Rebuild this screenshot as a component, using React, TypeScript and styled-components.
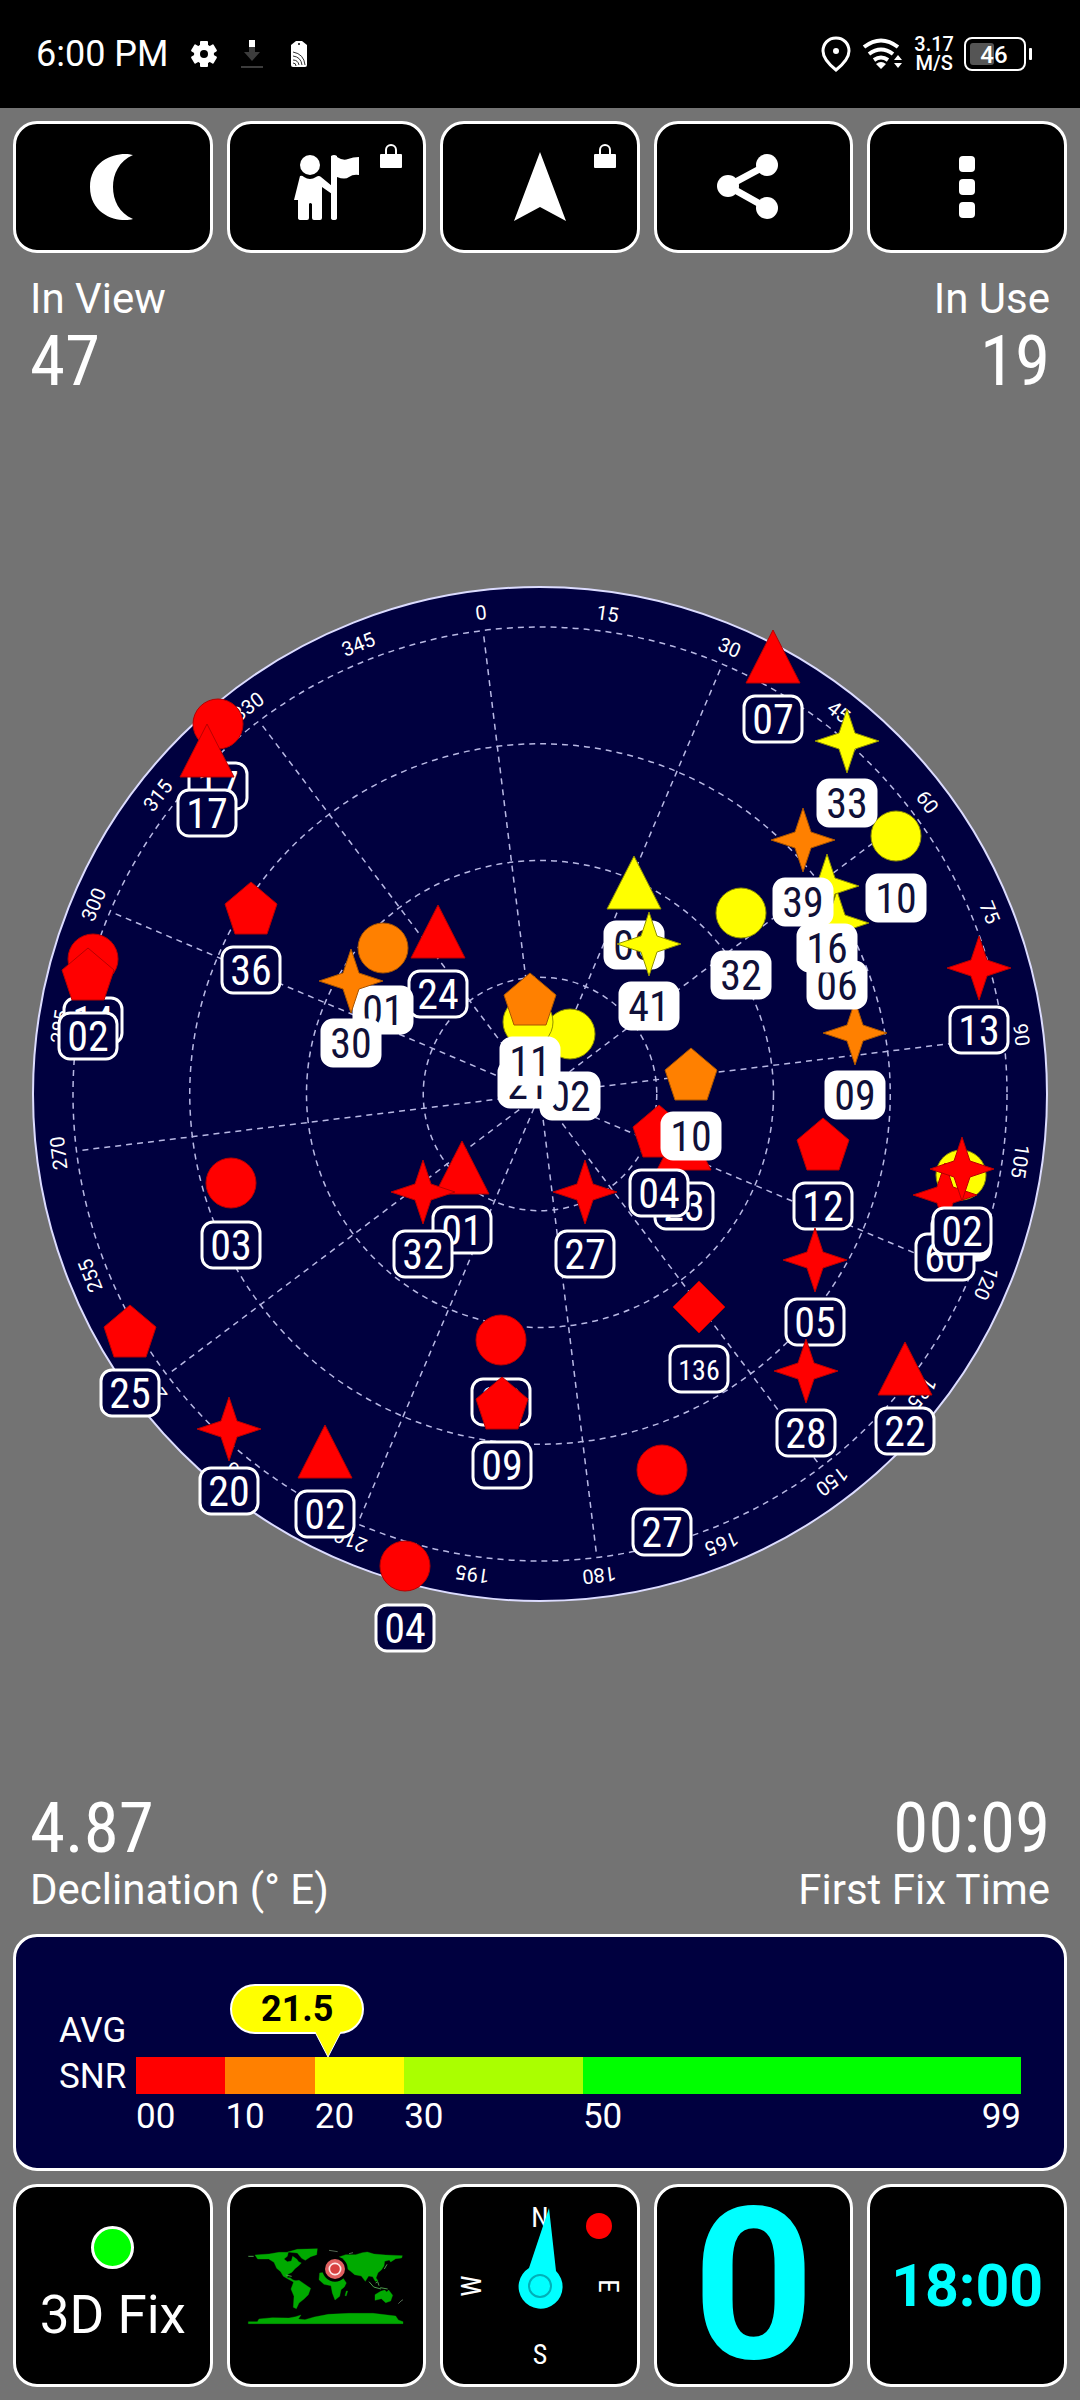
import React from "react";
import styled, { createGlobalStyle } from "styled-components";

const sans = `Roboto, "Noto Sans", sans-serif`;
const narrow = `"Roboto Condensed", Roboto, sans-serif`;
const navy = "#00003f";

const GlobalStyle = createGlobalStyle`
  *, *::before, *::after { box-sizing: border-box; }
  body { margin: 0; background: #737373; color: #fff; font-family: ${sans}; }
  button { font-family: inherit; }
`;

const Page = styled.div`
  display: flex;
  flex-direction: column;
  min-height: 100vh;
`;

const StatusBar = styled.header`
  display: flex;
  align-items: center;
  justify-content: space-between;
  height: 108px;
  padding: 0 48px 0 36px;
  background: #000;
`;

const StatusGroup = styled.div<{ $gap: number }>`
  display: flex;
  align-items: center;
  gap: ${(p) => p.$gap}px;
`;

const Clock = styled.span`
  font-size: 36px;
  line-height: 40px;
`;

const Speed = styled.span`
  display: flex;
  flex-direction: column;
  align-items: center;
  font-size: 20px;
  font-weight: 500;
  line-height: 19px;
`;

const Main = styled.main`
  display: flex;
  flex: 1;
  flex-direction: column;
  padding: 13px;
`;

const TileRow = styled.nav`
  display: grid;
  grid-template-columns: repeat(5, 1fr);
  gap: 14px;
`;

const Tile = styled.button<{ $tall?: boolean }>`
  position: relative;
  display: flex;
  flex-direction: column;
  align-items: center;
  justify-content: center;
  height: ${(p) => (p.$tall ? 203 : 132)}px;
  padding: 0;
  color: #fff;
  background: #000;
  border: 3px solid #fff;
  border-radius: 24px;
`;

const LockBadge = styled.svg`
  position: absolute;
  top: 19px;
  right: 20px;
`;

const StatRow = styled.section<{ $bottom?: boolean }>`
  display: flex;
  justify-content: space-between;
  padding: ${(p) => (p.$bottom ? "0 17px 20px" : "22px 17px 0")};
`;

const Stat = styled.dl<{ $end?: boolean; $flip?: boolean }>`
  display: flex;
  flex-direction: ${(p) => (p.$flip ? "column-reverse" : "column")};
  align-items: ${(p) => (p.$end ? "flex-end" : "flex-start")};
  margin: 0;
`;

const StatLabel = styled.dt`
  font-size: 42px;
  line-height: 48px;
`;

const StatValue = styled.dd`
  margin: 0;
  font-family: ${narrow};
  font-size: 71px;
  line-height: 76px;
`;

const SkyArea = styled.section`
  display: flex;
  flex: 1;
  align-items: center;
  margin: 0 -13px;
`;

const SkyChart = styled.svg`
  display: block;
  width: 100%;
  height: auto;
`;

const SnrPanel = styled.section`
  display: flex;
  height: 237px;
  margin-bottom: 13px;
  padding: 71px 43px 0 43px;
  background: ${navy};
  border: 3px solid #fff;
  border-radius: 24px;
`;

const SnrLabel = styled.h2`
  width: 77px;
  margin: 0;
  font-size: 35px;
  font-weight: 400;
  line-height: 46px;
`;

const SnrScale = styled.div`
  position: relative;
  flex: 1;
  padding-top: 49px;
`;

const SnrBar = styled.div`
  display: flex;
  height: 37px;
`;

const Segment = styled.div<{ $span: number; $color: string }>`
  flex: ${(p) => p.$span} 0 0;
  background: ${(p) => p.$color};
`;

const Ticks = styled.div`
  display: flex;
  padding-top: 2px;
  font-size: 35px;
  line-height: 42px;
`;

const Tick = styled.div<{ $span: number }>`
  display: flex;
  flex: ${(p) => p.$span} 0 0;
  justify-content: space-between;
`;

const Marker = styled.div`
  position: absolute;
  top: -24px;
  width: 0;
`;

const Bubble = styled.output`
  position: absolute;
  top: 0;
  right: -36px;
  width: 134px;
  height: 50px;
  color: #000;
  font-size: 36px;
  font-weight: 700;
  line-height: 46px;
  text-align: center;
  background: #ff0;
  border: 2px solid #fff;
  border-radius: 25px;
`;

const Pointer = styled.svg`
  position: absolute;
  top: 46px;
  left: -14px;
`;

const FixText = styled.span`
  font-size: 53px;
  line-height: 60px;
`;

const FixDot = styled.span`
  width: 43px;
  height: 43px;
  margin-bottom: 16px;
  background: #0f0;
  border: 3px solid #fff;
  border-radius: 50%;
`;

const Readout = styled.span<{ $size: number; $line: number }>`
  color: #0ff;
  font-size: ${(p) => p.$size}px;
  font-weight: 700;
  line-height: ${(p) => p.$line}px;
`;

/* ---------- sky plot ---------- */

type Shape = "circle" | "triangle" | "pentagon" | "star" | "diamond";
type Sat = [shape: Shape, color: string, x: number, y: number, id: string, used?: boolean];

const R = "#ff0000";
const O = "#ff8000";
const Y = "#ffff00";
const edge: Record<string, string> = { [R]: "#b80000", [O]: "#a85400", [Y]: "#909000" };

/* Offsets from the zenith, painted in order. */
const sats: Sat[] = [
  ["circle", R, -322, -370, "17"],
  ["triangle", R, -333, -343, "17"],
  ["pentagon", R, -289, -186, "36"],
  ["circle", R, -447, -135, "14"],
  ["pentagon", R, -452, -120, "02"],
  ["triangle", R, -102, -162, "24"],
  ["circle", O, -157, -146, "01", true],
  ["star", O, -189, -113, "30", true],
  ["triangle", R, 233, -437, "07"],
  ["circle", Y, 356, -258, "10", true],
  ["star", Y, 307, -353, "33", true],
  ["star", O, 315, -61, "09", true],
  ["star", Y, 297, -171, "06", true],
  ["star", Y, 287, -208, "16", true],
  ["star", O, 263, -254, "39", true],
  ["circle", Y, 201, -181, "32", true],
  ["triangle", Y, 94, -211, "08", true],
  ["star", Y, 109, -150, "41", true],
  ["star", R, 439, -126, "13"],
  ["circle", Y, 30, -60, "02", true],
  ["circle", Y, -12, -72, "21", true],
  ["pentagon", O, -10, -95, "11", true],
  ["triangle", R, 144, 50, "23"],
  ["pentagon", R, 119, 37, "04"],
  ["pentagon", O, 151, -20, "10", true],
  ["pentagon", R, 283, 50, "12"],
  ["star", R, 275, 166, "05"],
  ["star", R, 266, 277, "28"],
  ["star", R, 45, 98, "27"],
  ["diamond", R, 159, 213, "136"],
  ["triangle", R, 365, 275, "22"],
  ["circle", R, 122, 376, "27"],
  ["circle", Y, 421, 81, "05", true],
  ["star", R, 405, 101, "60"],
  ["star", R, 422, 75, "02"],
  ["circle", R, -309, 89, "03"],
  ["triangle", R, -78, 74, "01"],
  ["star", R, -117, 98, "32"],
  ["pentagon", R, -410, 237, "25"],
  ["star", R, -311, 335, "20"],
  ["triangle", R, -215, 358, "02"],
  ["circle", R, -39, 246, "08"],
  ["pentagon", R, -38, 309, "09"],
  ["circle", R, -135, 472, "04"],
];

const shapePath: Record<Shape, string> = {
  circle: "M-25 0a25 25 0 1 0 50 0a25 25 0 1 0-50 0z",
  triangle: "M0-27L27 26H-27z",
  pentagon: "M0-26L26-4L16 26H-16L-26-4z",
  star: "M0-32L8-8L32 0L8 8L0 32L-8 8L-32 0L-8-8z",
  diamond: "M0-26L26 0L0 26L-26 0z",
};

const RIM = 467;
const TURN = -7;

function Satellite({ sat }: { sat: Sat }) {
  const [shape, color, x, y, id, used] = sat;
  const small = id.length > 2;
  return (
    <g transform={`translate(${x} ${y})`}>
      <path d={shapePath[shape]} fill={color} stroke={edge[color]} strokeWidth="1" />
      <rect x="-29" y="39" width="58" height="46" rx="11" fill={used ? "#fff" : navy} stroke="#fff" strokeWidth="3" />
      <text
        y={small ? 73 : 77}
        textAnchor="middle"
        fill={used ? "#101038" : "#fff"}
        fontFamily={narrow}
        fontSize={small ? 28 : 42}
      >
        {id}
      </text>
    </g>
  );
}

function Sky() {
  const bearings = Array.from({ length: 24 }, (_, i) => i * 15);
  return (
    <SkyChart viewBox="-540 -559 1080 1120" role="img" aria-label="Satellite sky view">
      <circle r="507" fill={navy} stroke="#dcdcff" strokeWidth="2" />
      <g fill="none" stroke="#b8b8e4" strokeWidth="1.5" strokeDasharray="6 5">
        {[1, 2, 3, 4].map((n) => (
          <circle key={n} r={(RIM * n) / 4} />
        ))}
        {bearings
          .filter((b) => b % 30 === 0)
          .map((b) => (
            <path key={b} d={`M0-${RIM - 6}V0`} transform={`rotate(${b + TURN})`} />
          ))}
      </g>
      <g fill="#fff" fontFamily={sans} fontSize="20" textAnchor="middle">
        {bearings.map((b) => (
          <text key={b} y="-478" transform={`rotate(${b + TURN})`}>
            {b}
          </text>
        ))}
      </g>
      {sats.map((s, i) => (
        <Satellite key={i} sat={s} />
      ))}
    </SkyChart>
  );
}

/* ---------- icons ---------- */

const Lock = () => (
  <LockBadge width="24" height="26" viewBox="0 0 24 26" aria-hidden="true">
    <path d="M7 12V7a5 5 0 0 1 10 0v5" fill="none" stroke="#fff" strokeWidth="2" />
    <rect x="1" y="11" width="22" height="14" rx="1" fill="#fff" />
  </LockBadge>
);

const Moon = () => (
  <svg width="50" height="70" viewBox="0 0 50 70" aria-hidden="true">
    <path d="M45 3C33-1 2 5 2 35s31 36 43 32C31 61 25 48 25 35S31 9 45 3z" fill="#fff" />
  </svg>
);

const Guide = () => (
  <svg width="72" height="70" viewBox="0 0 72 70" aria-hidden="true">
    <g fill="#fff">
      <circle cx="20" cy="13" r="10" />
      <path d="M10 24q2-1 4 1q6 4 12 0q3-2 5 0l11 9v8l-10-7v31q0 2-2 2h-6q-2 0-2-2V52q-2-2-3 0v14q0 2-2 2h-6q-3 0-3-2V48H4z" />
      <path d="M41 4q3-2 6 0v1q6 4 11 2t11-2v18q-6-1-10 2t-12 0v41q0 2-3 2t-3-2z" />
    </g>
  </svg>
);

const Arrow = () => (
  <svg width="54" height="70" viewBox="0 0 54 70" aria-hidden="true">
    <path d="M27 0L53 69L27 55L1 69z" fill="#fff" />
  </svg>
);

const Share = () => (
  <svg width="76" height="68" viewBox="0 0 76 68" aria-hidden="true">
    <path d="M51 12L12 33L51 55" fill="none" stroke="#fff" strokeWidth="7" />
    <g fill="#fff">
      <circle cx="51" cy="12" r="11" />
      <circle cx="12" cy="33" r="11" />
      <circle cx="51" cy="55" r="11" />
    </g>
  </svg>
);

const Dots = () => (
  <svg width="16" height="62" viewBox="0 0 16 62" aria-hidden="true">
    <g fill="#fff">
      <rect width="16" height="16" rx="4" />
      <rect y="23" width="16" height="16" rx="4" />
      <rect y="46" width="16" height="16" rx="4" />
    </g>
  </svg>
);

const StatusLeftIcons = () => (
  <svg width="120" height="32" viewBox="1 0 120 32" aria-hidden="true">
    <g transform="translate(16 16)" fill="#fff">
      {[0, 60, 120].map((a) => (
        <rect key={a} x="-4" y="-13" width="8" height="26" rx="1" transform={`rotate(${a})`} />
      ))}
      <circle r="7" fill="none" stroke="#fff" strokeWidth="6" />
      <circle r="4" fill="#000" />
    </g>
    <path d="M61 7h6v7h5l-8 9l-8-9h5z" fill="#3c3c3c" />
    <rect x="61" y="2" width="6" height="7" fill="#fff" />
    <rect x="53" y="28" width="22" height="2" fill="#3c3c3c" />
    <path d="M103 7l5-4h6l5 4v20q0 2-2 2h-12q-2 0-2-2z" fill="#fff" />
    <circle cx="111" cy="6" r="1" fill="#000" />
    <path d="M105 14q11 2 12 13M105 18q8 1 9 9M105 22q5 0 6 5M105 25q3 0 3 3" fill="none" stroke="#333" />
  </svg>
);

const Pin = () => (
  <svg width="32" height="36" viewBox="0 0 32 36" aria-hidden="true">
    <path d="M16 2C8 2 3 8 3 15c0 8 8 15 13 19c5-4 13-11 13-19C29 8 24 2 16 2z" fill="none" stroke="#fff" strokeWidth="3" />
    <circle cx="16" cy="15" r="3" fill="#fff" />
  </svg>
);

const Wifi = () => (
  <svg width="42" height="32" viewBox="0 0 42 32" aria-hidden="true">
    <g fill="none" stroke="#fff" strokeWidth="4">
      <path d="M2 9q17-13 34 0" />
      <path d="M7 16q12-9 24 0" />
      <path d="M12 22q7-5 14 0" />
    </g>
    <path d="M14 26q5-4 10 0l-5 5z" fill="#fff" />
    <path d="M32 22l4-5l4 5zM32 25l4 5l4-5z" fill="#fff" />
  </svg>
);

const Battery = () => (
  <svg width="68" height="36" viewBox="0 0 68 36" role="img" aria-label="Battery 46 percent">
    <rect x="1" y="2" width="60" height="32" rx="7" fill="none" stroke="#fff" strokeWidth="2" />
    <rect x="6" y="7" width="24" height="22" rx="3" fill="#555" />
    <rect x="65" y="12" width="3" height="12" rx="1" fill="#fff" />
    <text x="30" y="27" fontFamily={sans} fontSize="24" fontWeight="500" fill="#fff" textAnchor="middle">
      46
    </text>
  </svg>
);

const WorldMap = () => (
  <svg width="176" height="90" viewBox="-3 4 528 270" role="img" aria-label="World map">
    <g fill="#00aa00" stroke="#00aa00" strokeWidth="1">
      <path d="M48 46l42-3l30-5l28 0l-3 12l-10 8l10 8l12-2l4-14l12 8l6 8l8 4l-8 8l-12 10l-8 10l-12 6l-2 10l8 0l8 6l14 6l-10 2l-18-10l-14-8l-8-14l-12-10l-8-18l-16-10h-33z" />
      <path d="M146 37l29-8l60-2l-2 18l-18 6l-16 11l-11-6l-13-16z" />
      <path d="M165 124l15-2l15 10l20 14l-7 19l-13 13l-15 12l-8 17l-9-4l2-33l-9-22z" />
      <path d="M242 100l28-4l40 16l12 18l-6 12l-10 8l-4 20l-14 11l-8-21l-4-22l-21-4l-15-14z" />
      <path d="M300 52l20-7l30 0l20-6l15-2l20 6l35 3l50 2l-2 7l-18 2l-15 10l-4-6l-14 4l-2 14l-8 12l-10 8l-6 16l6 8l-8 2l-8-14l-12-2l-10 16l-12-16l-20-4l-12-10l-20-15z" />
      <path d="M408 165l17-10l12-4l6 6l6-6l12 16l-6 17l-15 5l-13-12l-19 5z" />
      <path d="M318 168l4-14l4 0l-4 14z" />
      <path d="M28 252v-6h27l5-8l40-4l50 1l20-4l16-5l-8 12l20 2l28-8l42-8l62-3l72 0l68 8l8 12l14 5v6z" />
    </g>
    <g fill="none" stroke="#4c9a4c" strokeWidth="3">
      <path d="M390 126l14 16l22 6M410 130l6-4l4 12M424 144l22 4M436 88l8-14M28 50h16M140 106l18 4" />
      <path d="M478 192l8-8l6-4M270 32l26 4M330 42l12-3" strokeWidth="2" stroke="#7c9a7c" />
    </g>
    <circle cx="288" cy="88" r="38" fill="#000" />
    <circle cx="288" cy="88" r="30" fill="#e06060" />
    <circle cx="288" cy="88" r="17" fill="#d84040" stroke="#ffe8e8" strokeWidth="5" />
  </svg>
);

const Compass = () => (
  <svg width="190" height="196" viewBox="-95 -98 190 196" role="img" aria-label="Compass">
    <g fill="#fff" fontFamily={narrow} fontSize="28" textAnchor="middle">
      <text y="-59">N</text>
      <text y="-59" transform="rotate(90)">E</text>
      <text y="78">S</text>
      <text y="-59" transform="rotate(-90)">W</text>
    </g>
    <circle cx="59" cy="-60" r="13" fill="#f00" />
    <path d="M9-78L-11-18A22 22 0 1 0 16-15z" fill="#0ff" />
    <circle r="11" fill="none" stroke="#00b0b8" strokeWidth="2" />
  </svg>
);

const segments = [
  { span: 10, color: "#ff0000", from: "00" },
  { span: 10, color: "#ff8000", from: "10" },
  { span: 10, color: "#ffff00", from: "20" },
  { span: 20, color: "#aaff00", from: "30" },
  { span: 49, color: "#00ff00", from: "50", to: "99" },
];

const averageSnr = 21.5;

export default function App() {
  return (
    <Page>
      <GlobalStyle />
      <StatusBar>
        <StatusGroup $gap={20}>
          <Clock>6:00 PM</Clock>
          <StatusLeftIcons />
        </StatusGroup>
        <StatusGroup $gap={10}>
          <Pin />
          <Wifi />
          <Speed>
            <span>3.17</span>
            <span>M/S</span>
          </Speed>
          <Battery />
        </StatusGroup>
      </StatusBar>
      <Main>
        <TileRow aria-label="Actions">
          <Tile aria-label="Night mode"><Moon /></Tile>
          <Tile aria-label="Guide"><Guide /><Lock /></Tile>
          <Tile aria-label="Navigate"><Arrow /><Lock /></Tile>
          <Tile aria-label="Share"><Share /></Tile>
          <Tile aria-label="More"><Dots /></Tile>
        </TileRow>
        <StatRow>
          <Stat>
            <StatLabel>In View</StatLabel>
            <StatValue>47</StatValue>
          </Stat>
          <Stat $end>
            <StatLabel>In Use</StatLabel>
            <StatValue>19</StatValue>
          </Stat>
        </StatRow>
        <SkyArea>
          <Sky />
        </SkyArea>
        <StatRow $bottom>
          <Stat $flip>
            <StatLabel>Declination (° E)</StatLabel>
            <StatValue>4.87</StatValue>
          </Stat>
          <Stat $end $flip>
            <StatLabel>First Fix Time</StatLabel>
            <StatValue>00:09</StatValue>
          </Stat>
        </StatRow>
        <SnrPanel>
          <SnrLabel>AVG SNR</SnrLabel>
          <SnrScale>
            <SnrBar>
              {segments.map((s) => (
                <Segment key={s.from} $span={s.span} $color={s.color} />
              ))}
            </SnrBar>
            <Ticks>
              {segments.map((s) => (
                <Tick key={s.from} $span={s.span}>
                  <span>{s.from}</span>
                  {s.to && <span>{s.to}</span>}
                </Tick>
              ))}
            </Ticks>
            <Marker style={{ left: `${(averageSnr / 99) * 100}%` }}>
              <Bubble>{averageSnr}</Bubble>
              <Pointer width="28" height="28" viewBox="0 0 28 28" aria-hidden="true">
                <path d="M1 2L14 27L27 2" fill="#ff0" stroke="#fff" strokeWidth="1" />
                <rect x="2" width="24" height="3" fill="#ff0" />
              </Pointer>
            </Marker>
          </SnrScale>
        </SnrPanel>
        <TileRow aria-label="Instruments">
          <Tile $tall>
            <FixDot />
            <FixText>3D Fix</FixText>
          </Tile>
          <Tile $tall aria-label="Position"><WorldMap /></Tile>
          <Tile $tall aria-label="Compass"><Compass /></Tile>
          <Tile $tall><Readout $size={212} $line={180}>0</Readout></Tile>
          <Tile $tall><Readout $size={59} $line={60}>18:00</Readout></Tile>
        </TileRow>
      </Main>
    </Page>
  );
}
